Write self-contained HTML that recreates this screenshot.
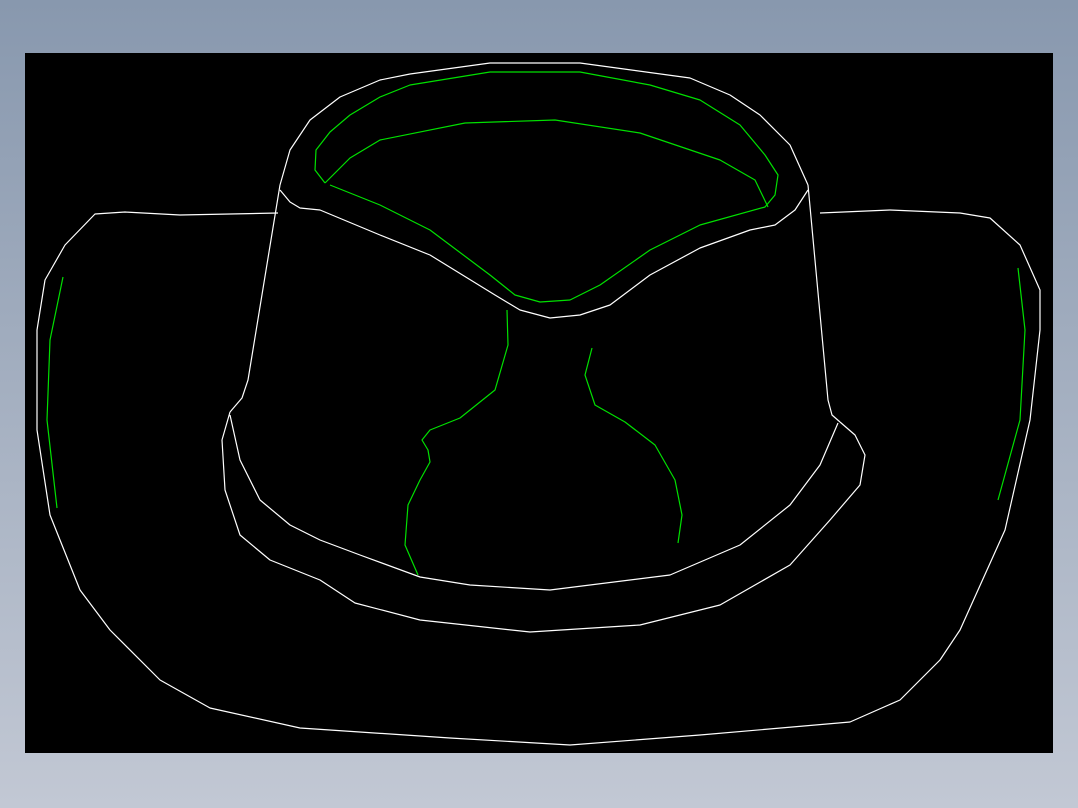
<!DOCTYPE html>
<html><head><meta charset="utf-8"><style>
html,body{margin:0;padding:0;width:1078px;height:808px;overflow:hidden;background:linear-gradient(#8898ae,#c2c8d4);}
svg{position:absolute;left:0;top:0}
</style></head><body>
<svg width="1078" height="808" viewBox="0 0 1078 808">
<rect x="25" y="53" width="1028" height="700" fill="#000"/>
<g fill="none" stroke="#fff" stroke-width="1.2" stroke-linejoin="round">
<polyline points="280,185 290,150 310,120 340,97 380,80 410,74 490,63 580,63 690,78 730,95 760,115 790,145 808,185"/>
<polyline points="280,185 248,380 242,398 230,412"/>
<polyline points="808,185 828,400 832,415 840,422"/>
<polyline points="280,190 290,202 300,208 320,210 380,235 430,255 495,295 520,310 550,318 580,315 610,305 650,275 700,248 750,230 775,225 795,210 808,190"/>
<polyline points="278,213 180,215 125,212 95,214 65,245 45,280 37,330 37,430 50,515 80,590 110,630 160,680 210,708 300,728 450,738 570,745 700,735 850,722 900,700 940,660 960,630 1005,530 1030,420 1040,330 1040,290 1020,245 990,218 960,213 890,210 820,213"/>
<polyline points="230,412 222,440 225,490 240,535 270,560 320,580 355,603 420,620 530,632 640,625 720,605 790,565 830,520 860,485 865,455 855,435 840,422"/>
<polyline points="230,415 240,460 260,500 290,525 320,540 360,555 420,577 470,585 550,590 670,575 740,545 790,505 820,465 838,423"/>
</g>
<g fill="none" stroke="#00e000" stroke-width="1.2" stroke-linejoin="round">
<polyline points="325,183 315,170 316,150 330,132 350,115 380,97 410,85 490,72 580,72 650,85 700,100 740,125 765,155 778,175 775,195 765,207 700,225 650,250 600,285 570,300 540,302 515,295 490,275 430,230 380,205 330,185"/>
<polyline points="325,183 350,158 380,140 465,123 555,120 640,133 720,160 755,180 768,207"/>
<polyline points="63,277 50,340 47,420 57,508"/>
<polyline points="1018,268 1025,330 1020,420 998,500"/>
<polyline points="507,310 508,345 495,390 460,418 430,430 422,440 428,450 430,462 420,480 408,505 405,545 418,575"/>
<polyline points="592,348 585,375 595,405 625,422 655,445 675,480 682,515 678,543"/>
</g>
</svg>
</body></html>
